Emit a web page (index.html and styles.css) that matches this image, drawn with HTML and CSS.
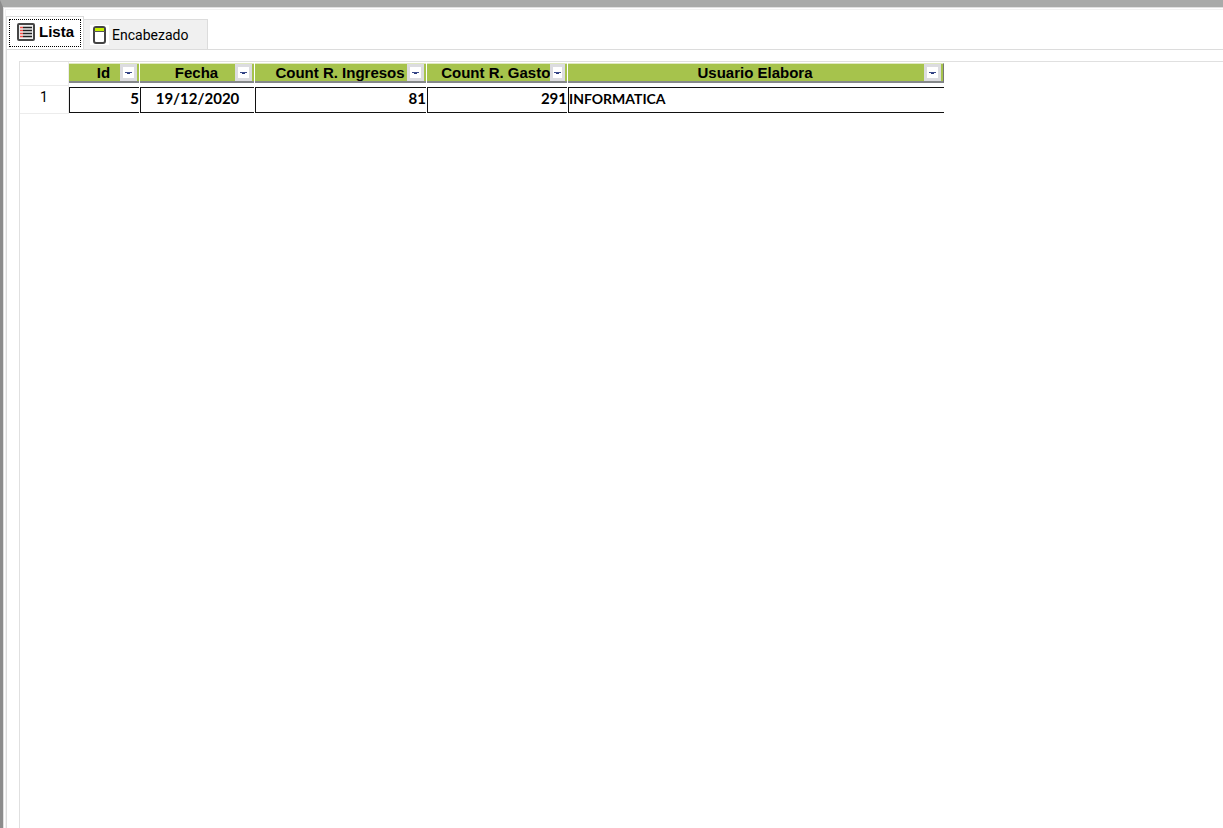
FILE: index.html
```html
<!DOCTYPE html>
<html lang="es">
<head>
    <meta charset="UTF-8">
    <meta name="viewport" content="width=device-width, initial-scale=1.0">
    <title>Lista</title>
    <link rel="stylesheet" href="styles.css">
</head>
<body>
    <div class="window">
        <div class="tabs" role="tablist">
            <button type="button" class="tab active" role="tab" aria-selected="true">
                <svg class="icon-list" width="18" height="18" viewBox="0 0 18 18">
                    <rect x="1" y="1" width="16" height="16" rx="1" fill="#eeeeee" stroke="#454545" stroke-width="2"/>
                    <path d="M3 4.5h3M3 7.5h3M3 10.5h3M3 13.5h3" stroke="#f2504a" stroke-width="1.6"/>
                    <path d="M6 4.5h9M6 7.5h9M6 10.5h9M6 13.5h9" stroke="#222" stroke-width="1.4"/>
                </svg>
                <span>Lista</span>
            </button>
            <button type="button" class="tab" role="tab" aria-selected="false">
                <svg class="icon-form" width="19" height="20" viewBox="0 0 19 20">
                    <rect width="19" height="20" fill="#fff"/>
                    <rect x="4" y="2" width="11" height="16" rx="2" fill="#fff" stroke="#444" stroke-width="2"/>
                    <path d="M5 3h9v3H5z" fill="#c6f000"/>
                    <path d="M4 6.5h11" stroke="#555"/>
                </svg>
                <span>Encabezado</span>
            </button>
        </div>
        <div class="panel" role="tabpanel">
            <div class="grid">
                <table>
                    <colgroup>
                        <col class="col-num">
                        <col class="col-id">
                        <col class="col-fecha">
                        <col class="col-ingresos">
                        <col class="col-gasto">
                        <col class="col-usuario">
                    </colgroup>
                    <thead>
                        <tr>
                            <td class="num"></td>
                            <th scope="col"><div class="head"><span>Id</span><button type="button" class="filter" aria-label="Filtrar Id"></button></div></th>
                            <th scope="col"><div class="head"><span>Fecha</span><button type="button" class="filter" aria-label="Filtrar Fecha"></button></div></th>
                            <th scope="col"><div class="head"><span>Count R. Ingresos</span><button type="button" class="filter" aria-label="Filtrar Count R. Ingresos"></button></div></th>
                            <th scope="col"><div class="head"><span>Count R. Gasto</span><button type="button" class="filter" aria-label="Filtrar Count R. Gasto"></button></div></th>
                            <th scope="col"><div class="head"><span>Usuario Elabora</span><button type="button" class="filter" aria-label="Filtrar Usuario Elabora"></button></div></th>
                        </tr>
                    </thead>
                    <tbody>
                        <tr>
                            <th scope="row" class="num">1</th>
                            <td><div class="cell right">5</div></td>
                            <td><div class="cell center">19/12/2020</div></td>
                            <td><div class="cell right">81</div></td>
                            <td><div class="cell right">291</div></td>
                            <td><div class="cell text">INFORMATICA</div></td>
                        </tr>
                    </tbody>
                </table>
            </div>
        </div>
    </div>
</body>
</html>
```
FILE: styles.css
```css
* {
    box-sizing: border-box;
}
body {
    margin: 0;
    background: #fff;
    color: #000;
    font-family: Roboto, "Liberation Sans", sans-serif;
    font-size: 14px;
}
.window {
    display: flex;
    flex-direction: column;
    min-height: 100vh;
    padding: 9px 0 0 3px;
    border-top: 7px solid #a9aaa9;
    border-left: 3px solid #8c8c8c;
    box-shadow: inset 1px 1px 0 #e0e0e0, inset 2px 2px 0 #fff, inset 3px 3px 0 #f2f2f2;
}

/* tabs */
.tabs {
    display: flex;
    align-items: flex-end;
}
.tab {
    display: flex;
    align-items: center;
    height: 30px;
    padding: 0 19px 0 6px;
    border: 1px solid #dcdcdc;
    border-left: 0;
    border-bottom: 0;
    background: #f0f0f0;
    color: #000;
    font: 14px/16px Roboto, "Liberation Sans", sans-serif;
}
.tab.active {
    height: 34px;
    margin-bottom: -1px;
    padding: 0 9px 4px 10px;
    border-left: 1px solid #dcdcdc;
    background: #fff;
    font: bold 15px/16px "Liberation Sans", Arial, sans-serif;
    outline: 1px dotted #000;
    outline-offset: -4px;
}
.icon-list {
    margin-right: 4px;
}
.icon-form {
    margin-right: 3px;
}

/* list */
.panel {
    display: flex;
    flex: 1;
    border-top: 1px solid #dcdcdc;
    border-left: 1px solid #dcdcdc;
    padding: 11px 0 0 12px;
}
.grid {
    flex: 1;
    border-top: 1px solid #e0e0e0;
    border-left: 1px solid #e0e0e0;
}
table {
    width: 925px;
    table-layout: fixed;
    border-collapse: separate;
    border-spacing: 0;
}
.col-num {
    width: 49px;
}
.col-id {
    width: 71px;
}
.col-fecha {
    width: 115px;
}
.col-ingresos {
    width: 172px;
}
.col-gasto {
    width: 141px;
}
.col-usuario {
    width: 377px;
}
th, td {
    padding: 0;
    vertical-align: top;
}
.num {
    border-bottom: 1px solid #ececec;
    border-right: 1px solid #ececec;
    font-weight: normal;
    line-height: 22px;
}
thead th {
    height: 24px;
    padding: 1px 1px 0 0;
}
thead th:last-child .head {
    border-right: 1px solid #777;
}
.head {
    display: flex;
    align-items: center;
    height: 20px;
    border-top: 1px solid #dfe8c0;
    border-bottom: 2px solid #85888a;
    background: #a6c34c;
    font: bold 15px/16px "Liberation Sans", Arial, sans-serif;
}
/* balances the filter button, gives way when the title is long */
.head::before {
    content: "";
    flex: 0 1 18px;
}
.head span {
    flex: 1 0 auto;
    text-align: center;
    white-space: nowrap;
}
.filter {
    display: flex;
    flex-direction: column;
    align-items: center;
    justify-content: center;
    width: 17px;
    height: 17px;
    margin-right: 2px;
    padding: 0;
    border: 3px solid #dcdce0;
    background: #fff;
}
.filter::before {
    content: "";
    width: 7px;
    height: 1px;
    background: #3c4c8c;
}
.filter::after {
    content: "";
    width: 3px;
    height: 1px;
    background: #27387c;
}
tbody td {
    height: 28px;
    padding: 1px 1px 0 0;
}
.cell {
    height: 26px;
    border: solid #111;
    border-width: 1px 0 1px 1px;
    font: bold 15px/21px Lato, "Open Sans", sans-serif;
}
.cell.text {
    font-size: 14px;
}
.right {
    text-align: right;
}
.center {
    text-align: center;
}
```
